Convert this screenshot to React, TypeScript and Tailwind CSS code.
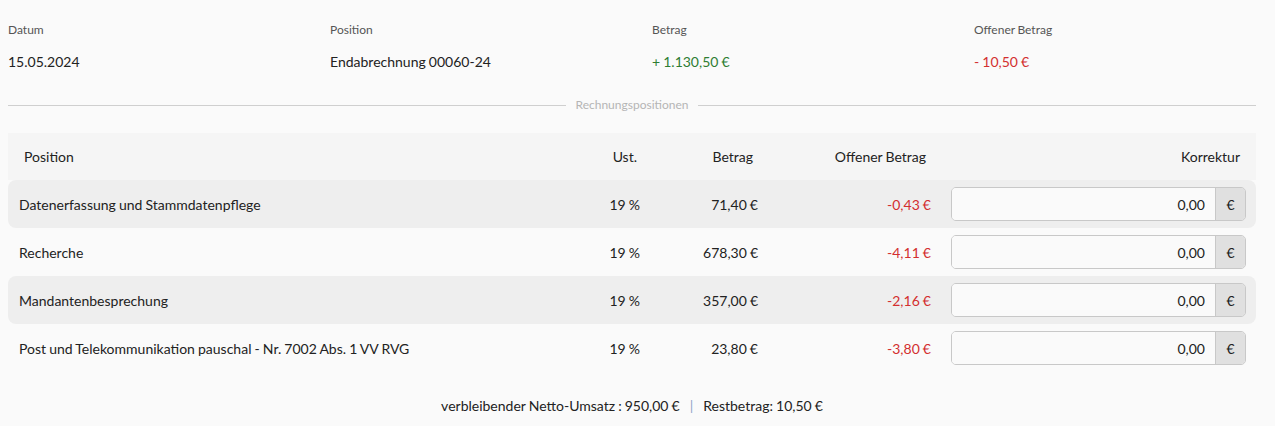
const rows = [
  { name: 'Datenerfassung und Stammdatenpflege', ust: '19 %', betrag: '71,40 €', offen: '-0,43 €' },
  { name: 'Recherche', ust: '19 %', betrag: '678,30 €', offen: '-4,11 €' },
  { name: 'Mandantenbesprechung', ust: '19 %', betrag: '357,00 €', offen: '-2,16 €' },
  { name: 'Post und Telekommunikation pauschal - Nr. 7002 Abs. 1 VV RVG', ust: '19 %', betrag: '23,80 €', offen: '-3,80 €' },
];

export default function App() {
  return (
    <div className="min-h-[426px] w-[1275px] bg-[#fafafa] font-['Lato',sans-serif] text-[#222] [word-spacing:-0.5px]">
      {/* Kopfdaten */}
      <div className="grid grid-cols-[322px_322px_322px_1fr] pl-[8px] pt-[22px]">
        {[
          ['Datum', '15.05.2024', 'text-[#222]'],
          ['Position', 'Endabrechnung 00060-24', 'text-[#222]'],
          ['Betrag', '+ 1.130,50 €', 'text-[#2e7d32]'],
          ['Offener Betrag', '- 10,50 €', 'text-[#d32f2f]'],
        ].map(([label, value, color]) => (
          <div key={label} className="flex flex-col">
            <span className="h-[16px] text-[12px] leading-[16px] text-[#555]">{label}</span>
            <span className={`mt-[16px] h-[16px] text-[14px] leading-[16px] ${color}`}>{value}</span>
          </div>
        ))}
      </div>

      <div className="mx-[8px] w-[1248px]">
        {/* Trenner */}
        <div className="mt-[27px] flex h-[16px] items-center gap-[10px]">
          <div className="h-px flex-1 bg-[#cfcfcf]" />
          <span className="text-[12px] leading-[16px] text-[#b5b5b5]">Rechnungspositionen</span>
          <div className="h-px flex-1 bg-[#cfcfcf]" />
        </div>

        {/* Tabelle */}
        <div className="mt-[20px]">
          <div className="grid h-[47px] grid-cols-[1fr_70px_118px_173px_315px] items-center bg-[#f5f5f5] pl-[11px] pr-[10px] text-[14px]">
            <span className="pl-[5px]">Position</span>
            <span className="pr-[3px] text-right">Ust.</span>
            <span className="pr-[5px] text-right">Betrag</span>
            <span className="pr-[5px] text-right">Offener Betrag</span>
            <span className="pr-[6px] text-right">Korrektur</span>
          </div>
          {rows.map((r, i) => (
            <div
              key={r.name}
              className={`grid h-[48px] grid-cols-[1fr_70px_118px_173px_315px] items-center rounded-[8px] pl-[11px] pr-[10px] text-[14px] ${
                i % 2 === 0 ? 'bg-[#eeeeee]' : ''
              }`}
            >
              <span>{r.name}</span>
              <span className="text-right">{r.ust}</span>
              <span className="text-right">{r.betrag}</span>
              <span className="text-right text-[#d32f2f]">{r.offen}</span>
              <div className="pl-[20px]">
                <div className="flex h-[34px] overflow-hidden rounded-[5px] border border-[#c8c8c8]">
                  <input
                    readOnly
                    value="0,00"
                    className="min-w-0 flex-1 bg-[#fafafa] px-[10px] text-right text-[14px] text-[#222] outline-none"
                  />
                  <span className="flex w-[30px] items-center justify-center border-l border-[#c8c8c8] bg-[#e0e0e0] text-[14px]">
                    €
                  </span>
                </div>
              </div>
            </div>
          ))}
        </div>

        {/* Summen */}
        <div className="mt-[25px] flex justify-center pb-[10px] text-[14px] leading-[18px]">
          <span>verbleibender Netto-Umsatz : 950,00 €</span>
          <span className="mx-[10px] text-[#90a4c8]">|</span>
          <span>Restbetrag: 10,50 €</span>
        </div>
      </div>
    </div>
  );
}
